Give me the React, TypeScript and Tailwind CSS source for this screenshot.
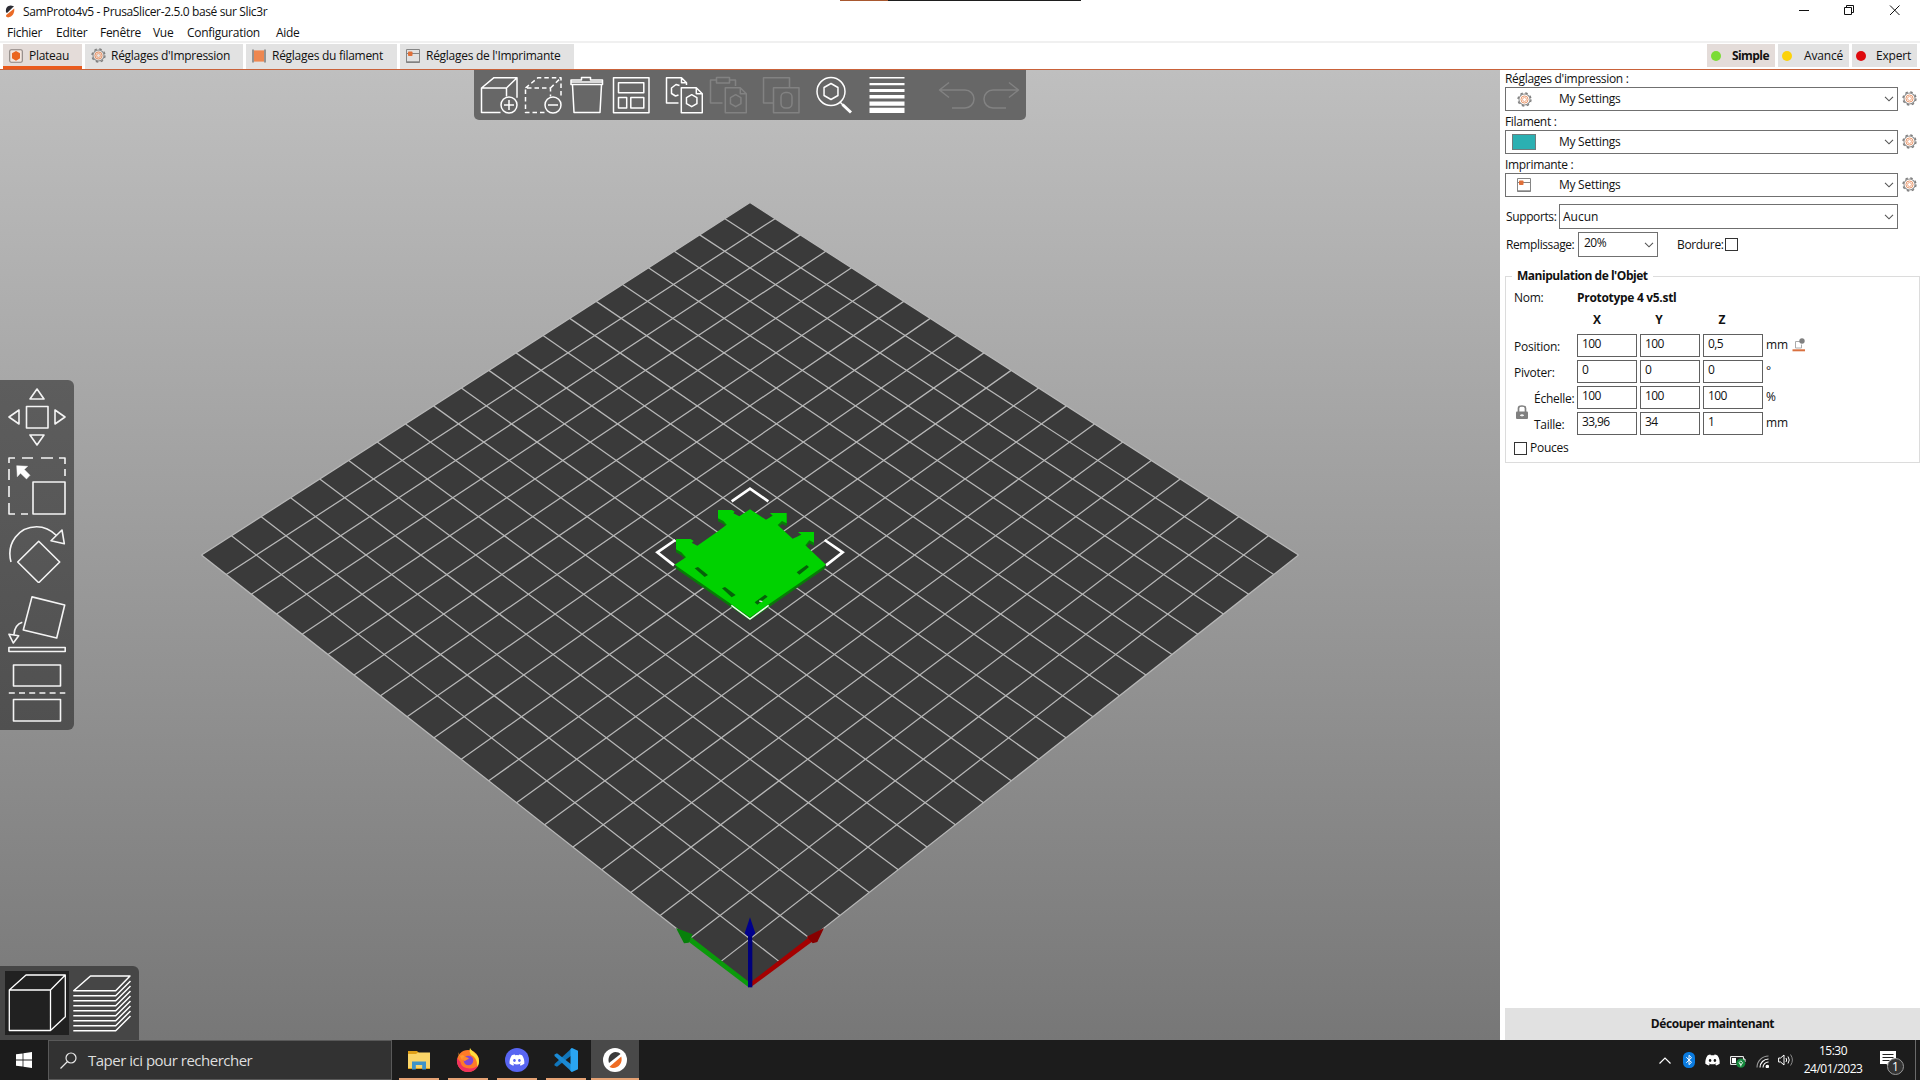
import type { ReactNode } from "react";

/* ---------- small icons ---------- */

function PrusaMark() {
  return (
    <svg viewBox="0 0 10 13" className="h-[13px] w-[10px] shrink-0">
      <path d="M1 7.2C.3 3 2.5.8 5.8.6L9 1.2 2 8z" fill="#2b2b33" />
      <path d="M9.2 3.6C9.8 8 7.5 12 3 12.5L1 11.4 1.2 10z" fill="#ea6a26" />
    </svg>
  );
}

function Gear({ filled = false }: { filled?: boolean }) {
  return (
    <svg viewBox="0 0 16 16" className="h-[15px] w-[15px] shrink-0" fill="none">
      <circle cx="8" cy="8" r="5.9" stroke="#8a8a8a" strokeWidth="1.1" />
      <circle cx="8" cy="8" r="6.9" stroke="#808080" strokeWidth="1.5" strokeDasharray="2.7 2.72" />
      <circle cx="8" cy="8" r="3.8" stroke="#e58450" strokeWidth="0.9" fill={filled ? "#f3e2d8" : "#fff"} />
      <circle cx="8" cy="8" r="2.1" stroke="#ea9468" strokeWidth="0.8" fill={filled ? "#e8e4e2" : "#fff"} />
    </svg>
  );
}

function PlaterIcon() {
  return (
    <svg viewBox="0 0 14 14" className="h-[14px] w-[14px] shrink-0">
      <rect x="0.7" y="0.7" width="12.6" height="12.6" rx="1.5" fill="#f3e6df" stroke="#8a8380" strokeWidth="1.1" />
      <path d="M7 2.8l3.3 1.9v4.2L7 11 3.7 8.9V4.7z" fill="#ea6520" stroke="#ea6520" strokeWidth="1.4" strokeLinejoin="round" />
    </svg>
  );
}

function SpoolIcon() {
  return (
    <svg viewBox="0 0 14 14" className="h-[14px] w-[14px] shrink-0">
      <rect x="2" y="1.4" width="10" height="11.2" fill="#ee8750" />
      <path d="M1 .5v13M13 .5v13" stroke="#808080" strokeWidth="1.6" />
    </svg>
  );
}

function PrinterIcon() {
  return (
    <svg viewBox="0 0 14 14" className="h-[14px] w-[14px] shrink-0" fill="none">
      <path d="M.5.5h13v13H.5zM.5 4.500h13" stroke="#858585" />
      <path d="M.5 13h13" stroke="#808080" strokeWidth="1.4" />
      <rect x="2" y="2.5" width="4.500" height="4.500" rx="0.8" fill="#e0703a" />
    </svg>
  );
}

function Chevron() {
  return (
    <svg viewBox="0 0 10 6" className="h-[6px] w-[10px] shrink-0" fill="none">
      <path d="M1 .8l4 4 4-4" stroke="#555" strokeWidth="1.1" />
    </svg>
  );
}

/* ---------- header ---------- */

const menus = [
  ["Fichier", "w-[49px]"],
  ["Editer", "w-[44px]"],
  ["Fenêtre", "w-[53px]"],
  ["Vue", "w-[34px]"],
  ["Configuration", "w-[89px]"],
  ["Aide", "w-[40px]"],
];

function Header() {
  return (
    <header className="flex h-[70px] flex-col border-b border-[#c9623a] bg-white">
      <div className="flex h-[22px] items-start">
        <div className="flex w-[840px] items-center gap-[8px] pt-[2px] pl-[5px]">
          <PrusaMark />
          <span className="leading-[19px] tracking-[-0.37px]">SamProto4v5 - PrusaSlicer-2.5.0 basé sur Slic3r</span>
        </div>
        <div className="flex h-[1px] w-[241px] shrink-0">
          <div className="h-[1px] w-[48px] bg-[#a8582f]" />
          <div className="h-[1px] flex-1 bg-[#1e1e1e]" />
        </div>
        <div className="flex flex-1 justify-end pr-[1px]">
          <svg viewBox="0 0 120 22" className="h-[22px] w-[120px]" fill="none" stroke="#111">
            <path d="M0 10.5h10" />
            <path d="M45.500 7.5h7v7h-7zM47.500 7.500v-2h7v7h-2" />
            <path d="M91 5.500l9.500 9.500M100.500 5.500L91 15" />
          </svg>
        </div>
      </div>
      <nav className="flex h-[21px] border-b-2 border-[#f0f0f0] pl-[7px]">
        {menus.map(([name, w]) => (
          <span key={name} className={`${w} leading-[21px] tracking-[-0.28px]`}>
            {name}
          </span>
        ))}
      </nav>
      <div className="flex h-[26px] justify-between pt-[1px] pr-[3px] pl-[3px]">
        <div className="flex gap-[3px]">
          <Tab className="w-[79px] border-b-[3px] border-[#ea5a1c] bg-[#e4dcd9]" icon={<PlaterIcon />} name="Plateau" />
          <Tab className="w-[158px] bg-[#e2e2e2]" icon={<Gear filled />} name="Réglages d'Impression" />
          <Tab className="w-[151px] bg-[#e2e2e2]" icon={<SpoolIcon />} name="Réglages du filament" />
          <Tab className="w-[174px] bg-[#e2e2e2]" icon={<PrinterIcon />} name="Réglages de l'Imprimante" />
        </div>
        <div className="flex gap-[3px]">
          <Mode className="w-[68px] bg-[#e4dcd9] font-bold tracking-[-0.55px]" dot="bg-[#7bdc35]" name="Simple" />
          <Mode className="w-[71px] bg-[#e2e2e2]" dot="bg-[#fcd20a]" name="Avancé" />
          <Mode className="w-[65px] bg-[#e2e2e2]" dot="bg-[#de0a0e]" name="Expert" />
        </div>
      </div>
    </header>
  );
}

function Tab({ className, icon, name }: { className: string; icon: ReactNode; name: string }) {
  return (
    <div className={`flex h-[25px] items-start gap-[6px] pl-[6px] ${className}`}>
      <span className="flex h-[23px] w-[14px] items-center">{icon}</span>
      <span className="leading-[23px] tracking-[-0.28px] whitespace-nowrap">{name}</span>
    </div>
  );
}

function Mode({ className, dot, name }: { className: string; dot: string; name: string }) {
  return (
    <div className={`flex h-[23px] items-center justify-between pr-[6px] pl-[4px] tracking-[-0.2px] ${className}`}>
      <span className={`h-[10px] w-[10px] rounded-full ${dot}`} />
      <span>{name}</span>
    </div>
  );
}

/* ---------- 3D view ---------- */

const CELLS = 20;

/* Perspective projection of bed coordinates (0..1 along each axis). */
function project(u: number, v: number) {
  const s = u + v;
  const w = 1 + 0.11165 * s;
  return `${(750 + (609.8 * (u - v)) / w).toFixed(2)},${((986.2 - 369.2 * s) / w).toFixed(2)}`;
}

function Bed() {
  const steps = Array.from({ length: CELLS + 1 }, (_, i) => i / CELLS);
  return (
    <g>
      <polygon points={[project(0, 0), project(1, 0), project(1, 1), project(0, 1)].join(" ")} fill="#3a3a3a" />
      <g stroke="#b8b8b8" strokeWidth="1.25">
        {steps.map((t) => (
          <g key={t}>
            <path d={`M${project(t, 0)}L${project(t, 1)}`} />
            <path d={`M${project(0, t)}L${project(1, t)}`} />
          </g>
        ))}
      </g>
    </g>
  );
}

const modelOutline =
  "M330 118L378 149 398 137 390 129H440V160L426 153 413 165 458 206 484 194 474 186H522V218L508 211 496 226 558 284 330 442 104 284 138 262 124 247 108 238V207H152L161 213 155 218 172 227 234 184 260 164 250 153 234 145V120H276L284 125 280 130 298 139Z";

function Model() {
  return (
    <g transform="translate(640 470) scale(0.33333)">
      <g fill="none" stroke="#fff" strokeWidth="8">
        <path d="M275 94l55-38 55 38M106 210l-54 37 50 39M554 210l54 37-50 39" />
      </g>
      <path d={modelOutline} transform="translate(0 9)" fill="#087c08" />
      <path d={modelOutline} fill="#00d200" />
      <path
        d="M164 295l10-4 30 24-10 6zM246 355l9-4 32 24-12 7zM470 307l30-22 7 6-29 23zM344 397l31-23 8 6-31 24z"
        fill="#06610a"
      />
      <path d="M358 393l9 2" stroke="#ddd" strokeWidth="4" />
      <path d="M274 406l56 41 56-41" fill="none" stroke="#e9ffe9" strokeWidth="4.500" />
    </g>
  );
}

function Axes() {
  return (
    <g transform="translate(660 900) scale(0.33333)">
      <path d="M266 262L84 124l10-12L272 250z" fill="#0a9a0a" />
      <path d="M48 84l50 19-12 25-14 2z" fill="#07800a" />
      <path d="M272 262L458 124l-10-13L268 250z" fill="#a50000" />
      <path d="M492 84l-20 42-14 4-18-20z" fill="#860000" />
      <path d="M264 104h13v158h-13z" fill="#00007c" />
      <path d="M270 52l16 48-8 8h-16l-8-8z" fill="#00008c" />
    </g>
  );
}

/* ---------- toolbars over the view ---------- */

const hex = (cx: number, cy: number, r: number) =>
  `M${cx} ${cy - r}l${r * 0.87} ${r / 2}v${r}l${-r * 0.87} ${r / 2}l${-r * 0.87} ${-r / 2}v${-r}z`;

const topTools: { gap: string; dim?: boolean; art: ReactNode }[] = [
  {
    gap: "ml-[6px]",
    art: (
      <>
        <path d="M20.500 36.500H1.500V12h25v8.500M1.500 12L14 1.700h23v20M26.500 12L37 1.700" />
        <circle cx="29" cy="29" r="8" />
        <path d="M24 29h10M29 24v10" />
      </>
    ),
  },
  {
    gap: "ml-[6px]",
    art: (
      <>
        <path d="M20.500 36.500H1.500V12h25v8.500M1.500 12L14 1.700h23v20M26.500 12L37 1.700" strokeDasharray="4.500 3" />
        <circle cx="29" cy="29" r="8" />
        <path d="M24 29h10" />
      </>
    ),
  },
  {
    gap: "ml-[6px]",
    art: <path d="M3 8.500v-4.500h10.500V1.500h9V4H34.500v4.500zM3 6h31.500M4.500 9l1.500 27.500h26L33.500 9" />,
  },
  {
    gap: "ml-[6px]",
    art: <path d="M1.500 1.700H37v35H1.500zM6.500 6.700h25.300v10H6.500zM6.500 21.500h8.200V32H6.500zM18.800 21.500h13V32h-13z" />,
  },
  {
    gap: "ml-[15px]",
    art: (
      <>
        <path d="M13.500 27H1.500V1.700h15l5 5V9M16.500 1.700v5h5M14.500 9.500L11 8.500 6.500 12v5.500l4 2.500 3-1" />
        <path d="M16.300 11.700h15l6 6v19h-21zM31.300 11.700v6h6" />
        <path d={hex(26.7, 24.7, 6)} />
      </>
    ),
  },
  {
    gap: "ml-[6px]",
    dim: true,
    art: (
      <>
        <path d="M13.500 27H1.500V4h6V1.500h13V4h6v6M7.500 4v3h13V4" />
        <path d="M16.300 11.700h15l6 6v19h-21zM31.300 11.700v6h6" />
        <path d={hex(26.7, 24.7, 6)} />
      </>
    ),
  },
  {
    gap: "ml-[15px]",
    dim: true,
    art: (
      <>
        <path d="M11 27H1.500V1.700h26V11M11.500 11.700h25.500v25H11.500z" />
        <rect x="19" y="16.500" width="11" height="15.500" rx="4.500" />
      </>
    ),
  },
  {
    gap: "ml-[15px]",
    art: (
      <>
        <circle cx="16" cy="15.500" r="14" />
        <path d={hex(16, 15.5, 8)} />
        <path d="M25 26l3 3" />
        <path d="M27.500 28.500l8.500 8" strokeWidth="3" />
      </>
    ),
  },
  {
    gap: "ml-[15px]",
    art: (
      <path
        stroke="none"
        fill="#fff"
        d="M1.500 1h35v1.500h-35zM1.500 7h35v2.300h-35zM1.500 13h35v3h-35zM1.500 19h35v3.500h-35zM1.500 25.500h35v4.200h-35zM1.500 31.800h35v5.200h-35z"
      />
    ),
  },
  {
    gap: "ml-[32px]",
    dim: true,
    art: <path d="M11 6.500L1.500 14l9.500 7.500M1.500 14H27a9 9 0 0 1 0 18H14" />,
  },
  {
    gap: "ml-[6px]",
    dim: true,
    art: <path d="M27 6.500l9.500 7.500L27 21.500M36.500 14H11a9 9 0 0 0 0 18h13" />,
  },
];

function TopToolbar() {
  return (
    <div className="absolute top-0 left-[474px] flex h-[50px] w-[552px] items-start rounded-b-[5px] bg-[#676767] pt-[6px]">
      {topTools.map((t, i) => (
        <svg
          key={i}
          viewBox="0 0 38 38"
          className={`h-[38px] w-[38px] shrink-0 ${t.gap}`}
          fill="none"
          stroke={t.dim ? "#828282" : "#fff"}
          strokeWidth="1.5"
          strokeLinejoin="round"
        >
          {t.art}
        </svg>
      ))}
    </div>
  );
}

const sideTools: { gap: string; art: ReactNode }[] = [
  {
    gap: "mt-[8px]",
    art: <path d="M29 1l7 10H22zM18.500 18.500H40V40H18.500zM1 29l10-7v14zM57 29l-10-7v14zM22 47h14l-7 10z" />,
  },
  {
    gap: "mt-[11px]",
    art: (
      <>
        <path d="M1 6V1h6M14 1h11M33 1h12M51 1h6v6M57 12v7M1 12v11M1 29v11M1 46v11h6M13 57h7" />
        <path d="M25 25h32v32H25z" />
        <path d="M8.700 8.700l11 .6-3.400 3.200 5.700 5.800-3.500 3.700-6-5.800-3.200 3.500z" fill="#fff" strokeWidth=".5" />
      </>
    ),
  },
  {
    gap: "mt-[10px]",
    art: (
      <>
        <path d="M3 37C-2 18 11 1.700 28.700 1.700 36 1.700 43 5 48.500 10.500" />
        <path d="M54 5L43 15.700l13.300 3zM30.700 16.300L51.700 37l-21 20.700L9.700 37z" />
      </>
    ),
  },
  {
    gap: "mt-[13px]",
    art: (
      <>
        <path d="M24 .9L56.700 9l-8 33-33.400-8zM14.300 26.300C9 28 6.500 32 6 38.300M1 38.300l9.700 1.400L5.300 47z" />
        <path d="M.9 51.500h56.300v4H.9z" />
      </>
    ),
  },
  {
    gap: "mt-[10px]",
    art: (
      <>
        <path d="M5.500 1h47v21h-47zM5.500 35.500h47V57h-47z" />
        <path d="M.8 29h56.500" strokeDasharray="6 4.200" />
      </>
    ),
  },
];

function SideToolbar() {
  return (
    <div className="absolute top-[310px] left-0 flex h-[350px] w-[74px] flex-col rounded-r-[6px] bg-[linear-gradient(#5d5d5d,#505050)] pl-[8px]">
      {sideTools.map((t, i) => (
        <svg
          key={i}
          viewBox="0 0 58 58"
          className={`h-[58px] w-[58px] shrink-0 ${t.gap}`}
          fill="none"
          stroke="#f4f4f4"
          strokeWidth="1.6"
          strokeLinejoin="round"
        >
          {t.art}
        </svg>
      ))}
    </div>
  );
}

function ViewToolbar() {
  const layers = [1, 2, 3, 4, 5, 6, 7, 8];
  return (
    <div className="absolute bottom-0 left-0 flex h-[74px] w-[139px] rounded-tr-[6px] bg-[#464646] pt-[5px] pl-[5px]">
      <svg viewBox="0 0 64 64" className="h-[64px] w-[64px] bg-[#212121]" fill="none" stroke="#fff" strokeWidth="1.300" strokeLinejoin="round">
        <path d="M4.300 19h41.200v40.500H4.300zM4.300 19L21 4h39.300v41.700L45.500 59.500M45.500 19L60.300 4" />
      </svg>
      <svg viewBox="0 0 64 64" className="h-[64px] w-[64px]" fill="none" stroke="#fff" strokeWidth="1.500" strokeLinejoin="round">
        <path d="M4.700 19.700L21.500 5H61L46.700 19.700z" />
        {layers.map((n) => (
          <path key={n} d={`M4.300 ${19.7 + n * 5}h42.400L61.500 ${5 + n * 5}`} />
        ))}
      </svg>
    </div>
  );
}

function View() {
  return (
    <main className="relative h-[970px] w-[1500px] bg-[linear-gradient(#bfbfbf,#777777)]">
      <svg viewBox="0 70 1500 970" className="block h-[970px] w-[1500px]">
        <Bed />
        <Model />
        <Axes />
      </svg>
      <TopToolbar />
      <SideToolbar />
      <ViewToolbar />
    </main>
  );
}

/* ---------- sidebar ---------- */

function Preset({ label, icon }: { label: string; icon: ReactNode }) {
  return (
    <div className="h-[43px]">
      <div className="h-[17px] leading-[17px] tracking-[-0.32px]">{label}</div>
      <div className="flex items-start gap-[4px]">
        <div className="flex h-[24px] w-[393px] items-center border border-[#707070] pr-[3px] pl-[6px]">
          <span className="flex w-[24px] justify-center">{icon}</span>
          <span className="ml-[23px] flex-1 tracking-[-0.27px]">My Settings</span>
          <Chevron />
        </div>
        <span className="pt-[4px]">
          <Gear />
        </span>
      </div>
    </div>
  );
}

const rows = [
  { label: "Position:", values: ["100", "100", "0,5"], unit: "mm" },
  { label: "Pivoter:", values: ["0", "0", "0"], unit: "°" },
  { label: "Échelle:", values: ["100", "100", "100"], unit: "%", indent: true },
  { label: "Taille:", values: ["33,96", "34", "1"], unit: "mm", indent: true },
];

function ObjectPanel() {
  return (
    <fieldset className="mt-[11px] h-[195px] w-[415px] border border-[#dcdcdc] pl-[8px]">
      <legend className="ml-[-2px] h-[16px] px-[5px] leading-[16px] font-bold tracking-[-0.48px]">Manipulation de l'Objet</legend>
      <div className="flex h-[24px] items-center pt-[3px]">
        <span className="w-[63px] tracking-[-0.25px]">Nom:</span>
        <span className="font-bold tracking-[-0.3px]">Prototype 4 v5.stl</span>
      </div>
      <div className="mb-[6px] ml-[63px] flex h-[20px] items-center gap-[3px] pt-[3px] font-bold">
        <span className="w-[60px] pr-[20px] text-center">X</span>
        <span className="w-[60px] pr-[22px] text-center">Y</span>
        <span className="w-[60px] pr-[22px] text-center">Z</span>
      </div>
      <div className="relative flex flex-col gap-[3px]">
        {rows.map((r) => (
          <div key={r.label} className="flex h-[23px] gap-[3px]">
            <span className={`w-[60px] pt-[4px] leading-[18px] tracking-[-0.25px] ${r.indent ? "pl-[20px]" : ""}`}>{r.label}</span>
            {r.values.map((v, i) => (
              <span key={i} className="h-[23px] w-[60px] border border-[#606060] pl-[4px] leading-[18px] tracking-[-0.6px]">
                {v}
              </span>
            ))}
            <span className="leading-[22px]">{r.unit}</span>
            {r.label === "Position:" && (
              <svg viewBox="0 0 14 14" className="mt-[4px] ml-[1px] h-[14px] w-[14px]" fill="none">
                <path d="M8 3.500H3.500V10h6V6.500" stroke="#aaa" />
                <circle cx="10" cy="3" r="2.700" fill="#808080" />
                <path d="M.5 12.300h12.500" stroke="#d9703f" strokeWidth="2" />
              </svg>
            )}
          </div>
        ))}
        <svg viewBox="0 0 12 14" className="absolute top-[71px] left-[2px] h-[14px] w-[12px]">
          <path d="M2.500 7V3.200Q2.500 1 6 1t3.500 2.200V7" fill="none" stroke="#808080" strokeWidth="1.700" />
          <rect y="6.500" width="12" height="7.500" rx="1" fill="#808080" />
          <path d="M4 10.300h4M6 9v2.500" stroke="#fff" />
        </svg>
      </div>
      <div className="mt-[6px] flex items-center gap-[3px]">
        <span className="h-[13px] w-[13px] border border-[#333]" />
        <span className="leading-[14px] tracking-[-0.25px]">Pouces</span>
      </div>
    </fieldset>
  );
}

function Sidebar() {
  return (
    <aside className="flex h-[970px] w-[420px] flex-col bg-white pl-[5px]">
      <Preset label="Réglages d'impression :" icon={<Gear />} />
      <Preset label="Filament :" icon={<span className="h-[16px] w-[24px] border border-[#6f7c7c] bg-[#2bb0b2]" />} />
      <Preset label="Imprimante :" icon={<PrinterIcon />} />
      <div className="mt-[5px] flex h-[25px] items-center">
        <span className="w-[54px] pl-[1px] tracking-[-0.38px]">Supports:</span>
        <div className="flex h-[25px] w-[339px] items-center justify-between border border-[#707070] pr-[3px] pl-[3px]">
          <span>Aucun</span>
          <Chevron />
        </div>
      </div>
      <div className="mt-[3px] flex h-[25px] items-center">
        <span className="w-[73px] pl-[1px] tracking-[-0.4px]">Remplissage:</span>
        <div className="flex h-[25px] w-[80px] items-center justify-between border border-[#707070] pr-[3px] pl-[5px]">
          <span className="pb-[4px] tracking-[-0.5px]">20%</span>
          <Chevron />
        </div>
        <span className="w-[67px] pl-[19px] tracking-[-0.35px]">Bordure:</span>
        <span className="h-[13px] w-[13px] border border-[#333]" />
      </div>
      <ObjectPanel />
      <div className="mt-auto flex h-[32px] items-center justify-center bg-[#e1e1e1] font-bold tracking-[-0.45px]">Découper maintenant</div>
    </aside>
  );
}

/* ---------- taskbar ---------- */

const discord =
  "M20.300 4.400A19.800 19.800 0 0 0 15.400 2.900l-.6 1.300a18.300 18.300 0 0 0-5.600 0L8.600 2.900A19.700 19.700 0 0 0 3.700 4.400C.6 9-.3 13.600.1 18.100a20 20 0 0 0 6 3l1.300-2.100-1.900-.9.500-.4a14.200 14.200 0 0 0 12 0l.5.4-1.900.9 1.300 2.100a20 20 0 0 0 6-3c.5-5.200-.8-9.800-3.600-13.700zM8 15.300c-1.200 0-2.200-1.100-2.200-2.400S6.800 10.500 8 10.500s2.200 1.100 2.200 2.400-1 2.400-2.200 2.400zm8 0c-1.200 0-2.200-1.100-2.200-2.400s1-2.400 2.200-2.400 2.200 1.100 2.200 2.400-1 2.400-2.200 2.400z";

const apps: { width: string; art: ReactNode }[] = [
  {
    width: "w-[40px] mr-[9px]",
    art: (
      <>
        <path d="M1 3h9l2 2h11v16H1z" fill="#e0a018" />
        <path d="M1 6h8l2-1.500h12V20H1z" fill="#fbd568" />
        <path d="M5 13.500h14v8h-3.800V17H8.800v4.500H5z" fill="#3f93c8" />
      </>
    ),
  },
  {
    width: "w-[40px] mr-[9px]",
    art: (
      <>
        <circle cx="12" cy="13" r="11" fill="#ff7a28" />
        <path d="M14 0c2 4 9 6 9 13 0 3-1 5-2 6 1-7-3-11-6-12-1-2-2-4-1-7z" fill="#ffdf3c" />
        <path d="M1 10C0 18 5 24 12 24c5 0 9-3 10.500-7-4 5-17 5-18-3z" fill="#f0315f" />
        <path d="M2 4l1 4 4-1 2 2-3 3z" fill="#ff9a2e" />
        <circle cx="12.500" cy="12.500" r="4.800" fill="#7e46d8" />
        <path d="M6 10c3-2 6-1 7 1-2 0-3 2-5 2z" fill="#ff8a2c" />
      </>
    ),
  },
  {
    width: "w-[40px] mr-[9px]",
    art: (
      <>
        <circle cx="12" cy="12" r="12" fill="#5865f2" />
        <g transform="translate(4.500 4.600) scale(.62)">
          <path d={discord} fill="#fff" />
        </g>
      </>
    ),
  },
  {
    width: "w-[40px] mr-[5px]",
    art: (
      <>
        <path d="M18 0v7L3 18.700.5 17.500V16z" fill="#1176bb" />
        <path d="M18 24v-7L3 5.300.5 6.500V8z" fill="#1b8ad4" />
        <path d="M18 0l6 2.800v18.400L18 24l-1.500-1V1z" fill="#2aa5f2" />
      </>
    ),
  },
  {
    width: "w-[48px] bg-[#494949]",
    art: (
      <>
        <circle cx="12" cy="12" r="12" fill="#fff" />
        <path d="M6 15C4 9 8 4 12.500 4c2 0 4.200.8 5 2z" fill="#3b3b3b" />
        <path d="M18.300 8.500c1.700 6.500-3 12-8.800 11.500-1.500-.2-2.500-.7-3-1.200z" fill="#ef6c23" />
      </>
    ),
  },
];

function Taskbar() {
  return (
    <footer className="flex h-[40px] bg-[#1c1c1c] text-white">
      <div className="flex w-[48px] items-center justify-center">
        <svg viewBox="0 0 16 16" className="h-[16px] w-[16px]" fill="#fff">
          <path d="M0 2.300L6.600 1.400v6.200H0zM7.400 1.300L16 0v7.600H7.400zM0 8.400h6.600v6.200L0 13.700zM7.400 8.400H16V16l-8.600-1.300z" />
        </svg>
      </div>
      <div className="flex w-[344px] items-center gap-[11px] border border-[#595959] bg-[#323232] pl-[11px] text-[15px] text-[#dedede]">
        <svg viewBox="0 0 17 17" className="h-[17px] w-[17px]" fill="none" stroke="#e8e8e8" strokeWidth="1.200">
          <circle cx="11" cy="6" r="5" />
          <path d="M7.500 9.500L.5 16.500" />
        </svg>
        <span className="tracking-[-0.5px]">Taper ici pour rechercher</span>
      </div>
      <div className="ml-[7px] flex">
        {apps.map((a, i) => (
          <div key={i} className={`flex h-[40px] items-center justify-center border-b-2 border-[#e5a274] ${a.width}`}>
            <svg viewBox="0 0 24 24" className="mt-[2px] h-[24px] w-[24px]">
              {a.art}
            </svg>
          </div>
        ))}
      </div>
      <div className="ml-auto flex h-[40px] items-center">
        <svg viewBox="0 0 12 7" className="mr-[12px] h-[7px] w-[12px]" fill="none" stroke="#fff" strokeWidth="1.200">
          <path d="M.5 6.500L6 1l5.500 5.500" />
        </svg>
        <svg viewBox="0 0 12 16" className="mr-[10px] h-[16px] w-[12px]">
          <rect width="12" height="16" rx="5.500" fill="#0a7be0" />
          <path d="M3.300 5.300l5.200 5L6 12.600V3.300l2.500 2.400-5.200 5" fill="none" stroke="#fff" />
        </svg>
        <svg viewBox="0 2 24 20" className="mr-[10px] h-[12px] w-[15px]">
          <path d={discord} fill="#fff" />
        </svg>
        <svg viewBox="0 0 16 13" className="mt-[3px] mr-[10px] h-[13px] w-[16px]" fill="none">
          <path d="M.6 1.600h12.800v7.800H.6zM14 4h1v3h-1" stroke="#fff" />
          <path d="M2 3h4v5H2z" fill="#fff" />
          <circle cx="10.800" cy="8.200" r="4.600" fill="#15883c" />
          <path d="M10.800 5.800l1.900 2-1.900 2.400-1.900-2.400zM10.800 8v3.500" stroke="#fff" strokeWidth=".8" />
        </svg>
        <svg viewBox="0 0 13 13" className="mt-[2px] mr-[9px] h-[13px] w-[13px]" fill="none" stroke="#fff" strokeWidth="1.100">
          <path d="M1 12.500A11.500 11.500 0 0 1 12.500 1" stroke="#9a9a9a" />
          <path d="M4 12.500A8.500 8.500 0 0 1 12.500 4M7 12.500A5.500 5.500 0 0 1 12.500 7" />
          <circle cx="11.300" cy="11.500" r="1.200" fill="#fff" />
        </svg>
        <svg viewBox="0 0 16 14" className="mr-[10px] h-[14px] w-[16px]" fill="none" stroke="#fff">
          <path d="M.6 5h2L6 2v10L2.600 9h-2zM8 5q1.300 2 0 4M10 3.500q2.500 3.500 0 7" />
          <path d="M12.500 1.500q3.800 5.500 0 11" stroke="#8a8a8a" />
        </svg>
        <div className="flex w-[58px] flex-col items-center text-[12px] leading-[18px] tracking-[-0.5px] whitespace-nowrap">
          <span>15:30</span>
          <span>24/01/2023</span>
        </div>
        <svg viewBox="0 0 26 26" className="mt-[4px] ml-[17px] h-[26px] w-[26px]">
          <path d="M1 2h16v13h-5l-2.500 3-2-3H1z" fill="#fff" />
          <path d="M3.500 5.500h11M3.500 8.500h11M3.500 11.500h7" stroke="#222" />
          <circle cx="16.500" cy="17.500" r="8" fill="#333" stroke="#999" />
          <text x="16.500" y="22" fill="#fff" fontSize="12" textAnchor="middle">
            1
          </text>
        </svg>
        <span className="ml-[10px] h-[40px] w-[5px] border-l border-[#6a6a6a]" />
      </div>
    </footer>
  );
}

export default function App() {
  return (
    <div className="h-[1080px] w-[1920px] overflow-hidden bg-white font-['Open_Sans','Noto_Sans',sans-serif] text-[12px] leading-[16px] text-[#111]">
      <Header />
      <div className="flex">
        <View />
        <Sidebar />
      </div>
      <Taskbar />
    </div>
  );
}
